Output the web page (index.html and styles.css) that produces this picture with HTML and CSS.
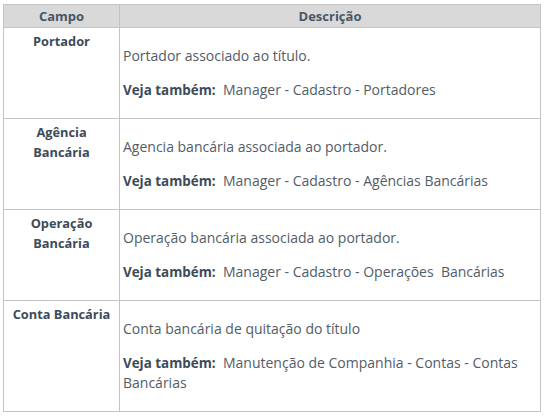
FILE: index.html
```html
<!DOCTYPE html>
<html lang="pt">
<head>
<meta charset="utf-8">
<link rel="stylesheet" href="styles.css">
</head>
<body>
<table class="grid">
  <thead>
    <tr><th class="col-field">Campo</th><th class="col-desc">Descrição</th></tr>
  </thead>
  <tbody>
    <tr>
      <td class="field">Portador</td>
      <td class="desc"><p>Portador associado ao título.</p><p><b>Veja também:</b>&nbsp; Manager - Cadastro - Portadores</p></td>
    </tr>
    <tr>
      <td class="field">Agência<br>Bancária</td>
      <td class="desc"><p>Agencia bancária associada ao portador.</p><p><b>Veja também:</b>&nbsp; Manager - Cadastro - Agências Bancárias</p></td>
    </tr>
    <tr>
      <td class="field">Operação<br>Bancária</td>
      <td class="desc"><p>Operação bancária associada ao portador.</p><p><b>Veja também:</b>&nbsp; Manager - Cadastro - Operações&nbsp; Bancárias</p></td>
    </tr>
    <tr>
      <td class="field">Conta Bancária</td>
      <td class="desc"><p>Conta bancária de quitação do título</p><p><b>Veja também:</b>&nbsp; Manutenção de Companhia - Contas - Contas Bancárias</p></td>
    </tr>
  </tbody>
</table>
</body>
</html>
```
FILE: styles.css
```css
html, body {
  margin: 0;
  background: #ffffff;
}
body {
  padding: 4px 0 0 3px;
  font-family: "Open Sans", "Liberation Sans", sans-serif;
  font-size: 13px;
  line-height: 20px;
  color: #525d68;
}
.grid {
  border-collapse: collapse;
  width: 538px;
  border: 1px solid #c4c4c4;
}
.grid th, .grid td {
  border: 1px solid #c4c4c4;
  vertical-align: top;
}
.grid th {
  background: #d9d9d9;
  color: #485766;
  font-weight: 700;
  text-align: center;
  height: 22px;
  padding: 0 4px;
  line-height: 22px;
}
.col-field { width: 107px; }
.field {
  color: #3d4b59;
  font-weight: 700;
  font-size: 12.8px;
  text-align: center;
  padding: 3px 5px;
}
.desc {
  padding: 4px 8px 4px 3px;
  font-size: 14px;
}
.desc p {
  margin: 14px 0;
}
.desc b {
  color: #3d4b59;
  font-size: 13.4px;
}
```
